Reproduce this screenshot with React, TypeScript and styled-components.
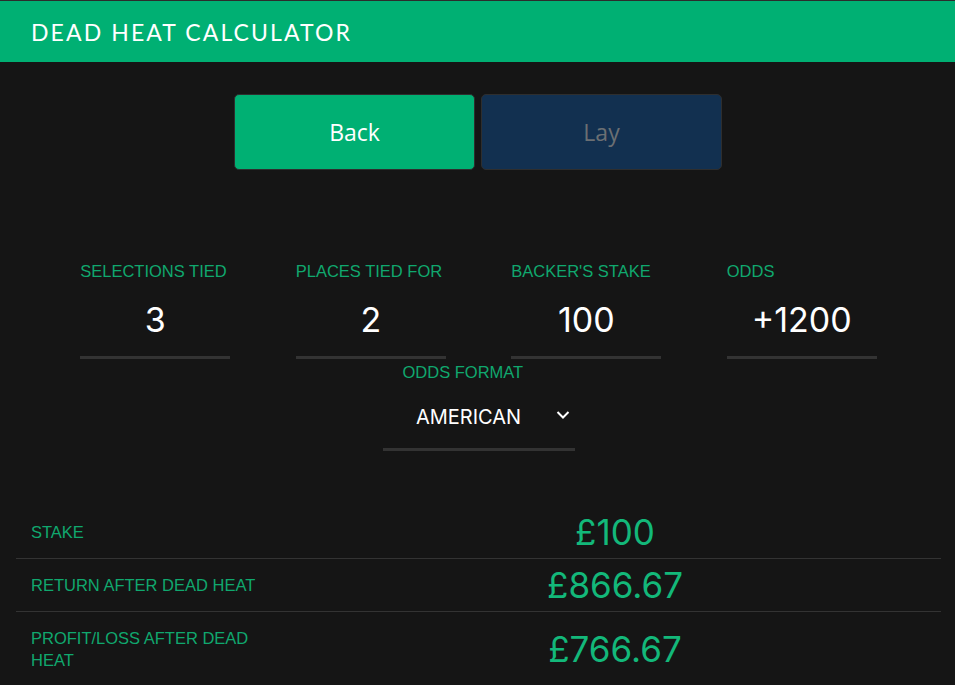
import React, { useState } from "react";
import styled, { createGlobalStyle } from "styled-components";

const GlobalStyle = createGlobalStyle`
  html, body {
    margin: 0;
    padding: 0;
    background: #151515;
  }
  * {
    box-sizing: border-box;
  }
`;

const Page = styled.div`
  min-height: 100vh;
  background: #151515;
  border-top: 1px solid #2c2c2c;
`;

const Header = styled.div`
  height: 61px;
  background: #00b073;
  display: flex;
  align-items: center;
  padding-left: 31px;
  color: #fff;
  font-family: "Lato", "Open Sans", sans-serif;
  font-size: 23px;
  letter-spacing: 2.1px;
`;

const ToggleRow = styled.div`
  display: flex;
  justify-content: center;
  gap: 6px;
  margin-top: 32px;
  padding-left: 1px;
`;

const ToggleButton = styled.button<{ $active: boolean }>`
  width: 241px;
  height: 76px;
  border: 1px solid #2e2e2e;
  border-radius: 5px;
  background: ${(p) => (p.$active ? "#00b073" : "#123050")};
  color: ${(p) => (p.$active ? "#ffffff" : "#6b6f73")};
  font-family: "Open Sans", sans-serif;
  font-size: 23px;
  cursor: pointer;
`;

const Fields = styled.div`
  display: flex;
  justify-content: center;
  gap: 65.5px;
  margin-top: 92px;
  padding-left: 2px;
`;

const Field = styled.div`
  width: 150px;
  display: flex;
  flex-direction: column;
`;

const Label = styled.div`
  color: #10a86e;
  font-family: "Liberation Sans", Arial, sans-serif;
  font-size: 16.5px;
  line-height: 18px;
  text-transform: uppercase;
  white-space: nowrap;
`;

const ValueInput = styled.input`
  width: 100%;
  background: transparent;
  border: none;
  border-bottom: 3px solid #333333;
  outline: none;
  color: #ffffff;
  text-align: center;
  font-family: "Inter", sans-serif;
  font-size: 34px;
  line-height: 38px;
  padding: 21px 0 17px;
`;

const FormatBlock = styled.div`
  width: 192px;
  margin: 4px auto 0;
  transform: translateX(1px);
`;

const FormatLabel = styled(Label)`
  padding-left: 20px;
`;

const SelectBox = styled.div`
  position: relative;
  height: 70px;
  display: flex;
  align-items: center;
  padding: 0 40px 0 20px;
  border-bottom: 3px solid #333333;
`;

const SelectText = styled.div`
  flex: 1;
  text-align: center;
  color: #ffffff;
  font-family: "Inter", sans-serif;
  font-size: 20px;
  margin-top: 4px;
`;

const Chevron = styled.svg`
  position: absolute;
  right: 5px;
  top: 29px;
`;

const Results = styled.div`
  margin: 55px 14px 0 16px;
`;

const Row = styled.div`
  display: grid;
  grid-template-columns: 273px 1fr;
  align-items: center;
  padding: 15px 0;
  border-bottom: 1px solid #333333;

  &:last-child {
    border-bottom: none;
  }
`;

const RowLabel = styled.div`
  padding: 0 15px;
  color: #10a86e;
  font-family: "Liberation Sans", Arial, sans-serif;
  font-size: 16.5px;
  line-height: 22px;
  text-transform: uppercase;
`;

const RowValue = styled.div`
  text-align: center;
  color: #13b87a;
  font-family: "Inter", sans-serif;
  font-size: 35px;
  line-height: 22px;
`;

const App = () => {
  const [mode, setMode] = useState<"back" | "lay">("back");
  const [selections, setSelections] = useState("3");
  const [places, setPlaces] = useState("2");
  const [stake, setStake] = useState("100");
  const [odds, setOdds] = useState("+1200");

  const results = [
    { label: "Stake", value: "£100" },
    { label: "Return after dead heat", value: "£866.67" },
    { label: "Profit/Loss after dead heat", value: "£766.67" },
  ];

  return (
    <>
      <GlobalStyle />
      <Page>
        <Header>DEAD HEAT CALCULATOR</Header>

        <ToggleRow>
          <ToggleButton $active={mode === "back"} onClick={() => setMode("back")}>
            Back
          </ToggleButton>
          <ToggleButton $active={mode === "lay"} onClick={() => setMode("lay")}>
            Lay
          </ToggleButton>
        </ToggleRow>

        <Fields>
          <Field>
            <Label>Selections tied</Label>
            <ValueInput value={selections} onChange={(e) => setSelections(e.target.value)} />
          </Field>
          <Field>
            <Label>Places tied for</Label>
            <ValueInput value={places} onChange={(e) => setPlaces(e.target.value)} />
          </Field>
          <Field>
            <Label>Backer's stake</Label>
            <ValueInput value={stake} onChange={(e) => setStake(e.target.value)} />
          </Field>
          <Field>
            <Label>Odds</Label>
            <ValueInput value={odds} onChange={(e) => setOdds(e.target.value)} />
          </Field>
        </Fields>

        <FormatBlock>
          <FormatLabel>Odds format</FormatLabel>
          <SelectBox>
            <SelectText>AMERICAN</SelectText>
            <Chevron width="14" height="10" viewBox="0 0 14 10">
              <path d="M1.5 2 L7 7.5 L12.5 2" stroke="#fff" strokeWidth="2" fill="none" />
            </Chevron>
          </SelectBox>
        </FormatBlock>

        <Results>
          {results.map((r) => (
            <Row key={r.label}>
              <RowLabel>{r.label}</RowLabel>
              <RowValue>{r.value}</RowValue>
            </Row>
          ))}
        </Results>
      </Page>
    </>
  );
};

export default App;
